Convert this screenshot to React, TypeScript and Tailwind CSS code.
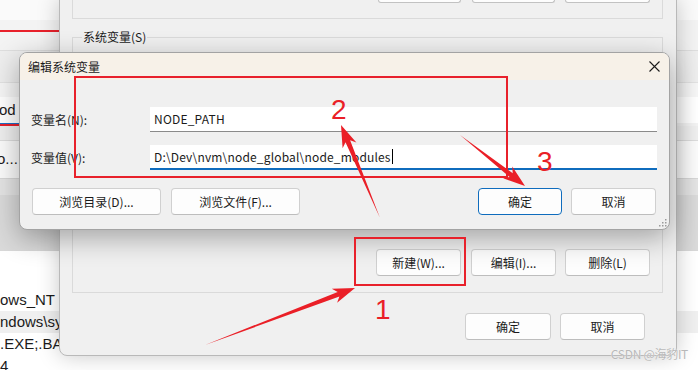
import React from 'react'

type Pt = [number, number]

// tapered red arrow, like the ones a screenshot tool draws
function arrowPoints(tail: Pt, tip: Pt, shaft = 5, head = 15, headLen = 22) {
  const dx = tip[0] - tail[0]
  const dy = tip[1] - tail[1]
  const len = Math.hypot(dx, dy)
  const ux = dx / len
  const uy = dy / len
  const nx = -uy
  const ny = ux
  const bx = tip[0] - ux * headLen
  const by = tip[1] - uy * headLen
  const sx = tip[0] - ux * headLen * 0.8
  const sy = tip[1] - uy * headLen * 0.8
  const pts: Pt[] = [
    tail,
    [sx + (nx * shaft) / 2, sy + (ny * shaft) / 2],
    [bx + (nx * head) / 2, by + (ny * head) / 2],
    tip,
    [bx - (nx * head) / 2, by - (ny * head) / 2],
    [sx - (nx * shaft) / 2, sy - (ny * shaft) / 2],
  ]
  return pts.map((p) => p.map((v) => v.toFixed(1)).join(',')).join(' ')
}

const ARROWS: { tail: Pt; tip: Pt }[] = [
  { tail: [205, 345], tip: [355, 288] },
  { tail: [380, 218], tip: [341, 125] },
  { tail: [460, 135], tip: [525, 186] },
]

function Btn({ children, w, primary, className = '' }: { children?: React.ReactNode; w: string; primary?: boolean; className?: string }) {
  return (
    <div
      className={`${w} ${className} flex h-[27px] shrink-0 items-center justify-center rounded-[4px] border bg-[#fdfdfd] text-[12px] text-[#1b1b1b] ${
        primary ? 'border-[#0f6cbd]' : 'border-[#d0d0d0] border-b-[#bdbdbd]'
      }`}
    >
      {children}
    </div>
  )
}

// only the bottom edge of these buttons is inside the picture
function BtnEdge({ w, className = '' }: { w: string; className?: string }) {
  return <div className={`${w} ${className} h-[3px] shrink-0 rounded-b-[4px] border-x border-b border-[#c2c2c2] bg-[#fdfdfd]`} />
}

export default function App() {
  return (
    <div className="relative h-[370px] w-[698px] overflow-hidden bg-[#f3f3f3] font-['Noto_Sans_CJK_SC','Noto_Sans',sans-serif] text-[#1b1b1b]">
      {/* window behind everything (left strip) */}
      <div className="absolute inset-0 flex flex-col">
        <div className="h-[20px] shrink-0 bg-[#fafafa]" />
        <div className="flex h-[30px] shrink-0 flex-col bg-[#f3f3f3] pt-[10px]">
          <div className="h-[2px] w-[60px] bg-[#e8212b]" />
        </div>
        <div className="h-[32px] shrink-0 border-t border-[#dedede] bg-[#eeeeee]" />
        <div className="h-[15px] shrink-0 border-t border-[#e2e2e2] bg-[#f6f6f6]" />
        <div className="flex h-[26px] shrink-0 items-center bg-white font-['Liberation_Sans',sans-serif] text-[15px]">
          <span className="-ml-[1px]">od</span>
        </div>
        <div className="h-[1px] w-[60px] shrink-0 bg-[#1f6fc6]" />
        <div className="h-[2px] w-[60px] shrink-0 bg-[#e8212b]" />
        <div className="h-[14px] shrink-0 bg-[#efefef]" />
        <div className="flex h-[38px] shrink-0 items-center border-t border-[#dcdcdc] bg-[#fbfbfb] font-['Liberation_Sans',sans-serif] text-[15px]">
          <span className="-ml-[3px]">o...</span>
        </div>
        <div className="h-[17px] shrink-0 border-t border-[#d6d6d6] bg-[#e4e4e4]" />
        <div className="h-[55px] shrink-0 bg-[#dadada]" />
        <div className="flex min-h-0 flex-1 flex-col overflow-hidden border-t border-[#d8d8d8] bg-white pt-[38px] font-['Liberation_Sans',sans-serif] text-[15px] leading-[22px]">
          <div className="h-[22px] shrink-0">ows_NT</div>
          <div className="h-[22px] shrink-0 bg-[#f0f0f0]">ndows\system32</div>
          <div className="h-[22px] shrink-0">.EXE;.BAT;.CMD</div>
          <div className="h-[22px] shrink-0">4</div>
        </div>
      </div>

      {/* 环境变量 dialog, its top lies above the picture */}
      <div className="absolute left-[59px] top-[-1px] flex h-[357px] w-[618px] flex-col rounded-b-[8px] border border-[#b9b9b9] bg-[#f0f0f0] pl-[12px] pr-[13px] shadow-[0_0_22px_rgba(0,0,0,0.22)]">
        <div className="flex h-[19px] shrink-0 items-start justify-end border-x border-b border-[#dadada] pr-[12px]">
          <BtnEdge w="w-[83px]" />
          <BtnEdge w="w-[83px]" className="ml-[11px]" />
          <BtnEdge w="w-[85px]" className="ml-[10px]" />
        </div>
        <div className="relative mt-[18px] flex h-[256px] shrink-0 items-end justify-end border border-[#dadada] pb-[16px] pr-[12px]">
          <span className="absolute left-[9px] top-[-9px] bg-[#f0f0f0] px-[1px] text-[12px] leading-[16px]">系统变量(S)</span>
          <Btn w="w-[85px]">新建(W)...</Btn>
          <Btn w="w-[85px]" className="ml-[10px]">编辑(I)...</Btn>
          <Btn w="w-[85px]" className="ml-[9px]">删除(L)</Btn>
        </div>
        <div className="mr-[18px] mt-[20px] flex shrink-0 justify-end">
          <Btn w="w-[86px]">确定</Btn>
          <Btn w="w-[85px]" className="ml-[9px]">取消</Btn>
        </div>
      </div>

      {/* 编辑系统变量 dialog */}
      <div className="absolute left-[19px] top-[52px] flex h-[178px] w-[651px] flex-col overflow-hidden rounded-[8px] border border-[#a3a3a3] bg-[#f0f0f0] shadow-[0_8px_28px_rgba(0,0,0,0.32)]">
        <div className="flex h-[27px] shrink-0 items-center justify-between bg-[#f7f1e8] pl-[8px] pr-[9px] text-[12px]">
          <span>编辑系统变量</span>
          <svg width="11" height="11" viewBox="0 0 11 11" className="text-[#1b1b1b]">
            <path d="M0.5 0.5 L10.5 10.5 M10.5 0.5 L0.5 10.5" stroke="currentColor" strokeWidth="1.1" />
          </svg>
        </div>
        <div className="flex flex-col pl-[11px] pr-[12px] pt-[27px] text-[12px]">
          <div className="flex h-[25px] items-center">
            <span className="w-[119px] shrink-0">变量名(N):</span>
            <div className="flex h-full flex-1 items-center border-b border-[#8a8a8a] bg-white pl-[4px] tracking-[0.2px]">NODE_PATH</div>
          </div>
          <div className="mt-[13px] flex h-[25px] items-center">
            <span className="w-[119px] shrink-0">变量值(V):</span>
            <div className="flex h-full flex-1 items-center border-b-2 border-[#0f6cbd] bg-white pl-[4px] tracking-[0.17px]">
              <span>D:\Dev\nvm\node_global\node_modules</span>
              <span className="ml-[1px] h-[15px] w-[1px] bg-black" />
            </div>
          </div>
          <div className="mt-[18px] flex">
            <Btn w="w-[129px]" className="ml-[1px]">浏览目录(D)...</Btn>
            <Btn w="w-[129px]" className="ml-[10px]">浏览文件(F)...</Btn>
            <Btn w="w-[84px]" primary className="ml-auto">确定</Btn>
            <Btn w="w-[85px]" className="ml-[9px] mr-[1px]">取消</Btn>
          </div>
        </div>
        <svg width="8" height="8" viewBox="0 0 8 8" className="absolute bottom-[2px] right-[2px] text-[#9a9a9a]">
          <rect x="6" y="0" width="1.5" height="1.5" fill="currentColor" />
          <rect x="3" y="3" width="1.5" height="1.5" fill="currentColor" />
          <rect x="6" y="3" width="1.5" height="1.5" fill="currentColor" />
          <rect x="0" y="6" width="1.5" height="1.5" fill="currentColor" />
          <rect x="3" y="6" width="1.5" height="1.5" fill="currentColor" />
          <rect x="6" y="6" width="1.5" height="1.5" fill="currentColor" />
        </svg>
      </div>

      {/* annotations */}
      <div className="absolute left-[74px] top-[76px] h-[102px] w-[434px] border-2 border-[#e8212b]" />
      <div className="absolute left-[354px] top-[237px] h-[49px] w-[112px] border-2 border-[#e8212b]" />
      <svg width="698" height="370" className="pointer-events-none absolute left-0 top-0">
        {ARROWS.map((a, i) => (
          <polygon key={i} points={arrowPoints(a.tail, a.tip)} fill="#ea1f27" />
        ))}
      </svg>
      <span className="absolute left-[331px] top-[96px] font-['Liberation_Sans',sans-serif] text-[28px] leading-none text-[#ea1f27]">2</span>
      <span className="absolute left-[537px] top-[148px] font-['Liberation_Sans',sans-serif] text-[28px] leading-none text-[#ea1f27]">3</span>
      <span className="absolute left-[375px] top-[296px] font-['Liberation_Sans',sans-serif] text-[28px] leading-none text-[#ea1f27]">1</span>

      <span className="absolute bottom-[7px] right-[10px] text-[12px] tracking-[-0.3px] text-[#b8b8b8] [text-shadow:0_0_1px_#fff]">CSDN @海豹IT</span>
    </div>
  )
}
